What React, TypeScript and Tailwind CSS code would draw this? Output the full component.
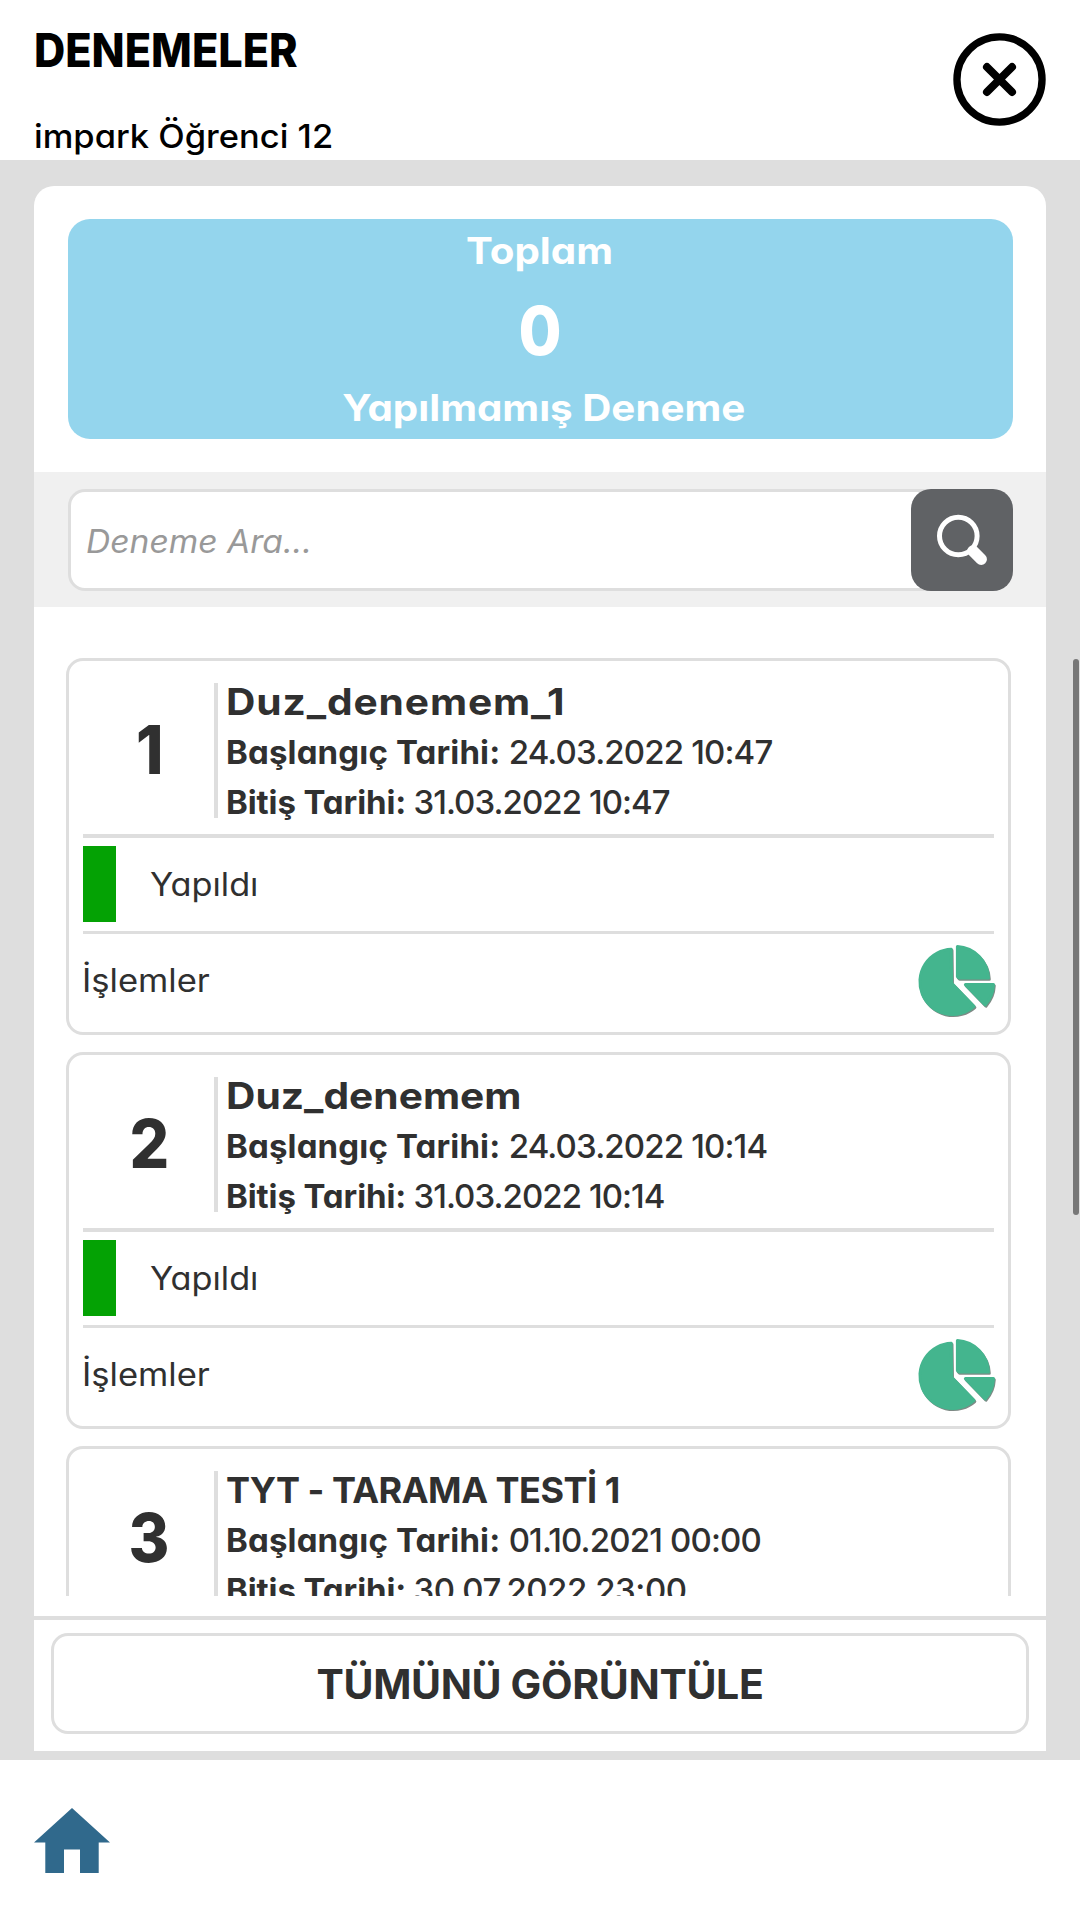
interface Exam {
  id: number;
  title: string;
  titleClass: string;
  start: string;
  end: string;
  endClass: string;
}

const exams: Exam[] = [
  {
    id: 1,
    title: "Duz_denemem_1",
    titleClass: "text-[37px] scale-x-[1.1] tracking-[0.8px]",
    start: "24.03.2022 10:47",
    end: "31.03.2022 10:47",
    endClass: "tracking-[-0.95px]",
  },
  {
    id: 2,
    title: "Duz_denemem",
    titleClass: "text-[37px] scale-x-[1.1]",
    start: "24.03.2022 10:14",
    end: "31.03.2022 10:14",
    endClass: "tracking-[-0.95px]",
  },
  {
    id: 3,
    title: "TYT - TARAMA TESTİ 1",
    titleClass: "text-4xl tracking-[-0.5px]",
    start: "01.10.2021 00:00",
    end: "30.07.2022 23:00",
    endClass: "tracking-[-0.45px]",
  },
];

function CloseIcon() {
  return (
    <svg width="93" height="93" viewBox="0 0 94 94" fill="none" stroke="#000">
      <circle cx="47" cy="47" r="43" strokeWidth="7.4" />
      <path d="M34.3 34.3 L59.7 59.7 M59.7 34.3 L34.3 59.7" strokeWidth="8" strokeLinecap="round" />
    </svg>
  );
}

function SearchIcon() {
  return (
    <svg width="102" height="102" viewBox="0 0 102 102" fill="none" stroke="#fff">
      <circle cx="47.3" cy="47" r="18.8" strokeWidth="5" />
      <path d="M62 62 L70.2 70.2" strokeWidth="11.5" strokeLinecap="round" />
      <path d="M59 59 L66 66" strokeWidth="9" />
    </svg>
  );
}

function PieShapes() {
  return (
    <g strokeWidth="3" strokeLinejoin="round">
      <path d="M33.2 4.2 A32.6 32.6 0 1 0 56 61.3 L33.7 38.2 Z" />
      <path d="M39.4 1.5 A33 33 0 0 1 70.5 33 L40.8 33 L39.4 31.5 Z" />
      <path d="M47.4 39.6 L75.5 39.6 A33 33 0 0 1 67.2 60 Z" />
    </g>
  );
}

function PieIcon() {
  return (
    <svg width="78" height="74" viewBox="0 0 78 74" className="-mt-0.5 -mr-0.5 overflow-visible">
      <g transform="translate(0.8 1.2)" fill="#7d8a85" stroke="#7d8a85">
        <PieShapes />
      </g>
      <g fill="#44b58e" stroke="#44b58e">
        <PieShapes />
      </g>
    </svg>
  );
}

function HomeIcon() {
  return (
    <svg width="76" height="65" viewBox="0 0 76 65" fill="#30698c">
      <path d="M38 0 L76 34.5 H64.7 V65 H46 V41.5 H30 V65 H11.3 V34.5 H0 Z" />
    </svg>
  );
}

function ExamCard({ exam }: { exam: Exam }) {
  return (
    <div className="shrink-0 rounded-[17px] border-[3px] border-[#dedede] px-3.5">
      <div className="flex border-b-4 border-[#dedede] pt-[22px] pb-4">
        <div className="flex h-[135px] w-[131px] items-center justify-center pl-0.5 text-[67px] font-extrabold">
          <span className="scale-x-[0.93]">{exam.id}</span>
        </div>
        <div className="h-[135px] border-l-4 border-[#dedede] pl-2">
          <div className="-mt-1.5 whitespace-nowrap">
            <div className={`origin-left leading-[50px] font-bold ${exam.titleClass}`}>{exam.title}</div>
            <div className="text-[33px] leading-[50px]">
              <span className="mr-[-1px] font-bold tracking-[0.15px]">Başlangıç Tarihi:</span>{" "}
              <span className="font-medium tracking-[-0.85px]">{exam.start}</span>
            </div>
            <div className="text-[33px] leading-[50px]">
              <span className="mr-[-2px] font-bold tracking-[-0.1px]">Bitiş Tarihi:</span>{" "}
              <span className={`font-medium ${exam.endClass}`}>{exam.end}</span>
            </div>
          </div>
        </div>
      </div>
      <div className="flex items-center border-b-[3px] border-[#dedede] pt-2 pb-[9px]">
        <div className="h-[76px] w-[33px] bg-[#04a204]" />
        <span className="mt-0.5 ml-[34px] origin-left scale-x-[1.07] text-[32px]">Yapıldı</span>
      </div>
      <div className="flex h-[98px] items-center justify-between">
        <span className="-mt-1 -ml-px origin-left scale-x-[1.08] text-[32px]">İşlemler</span>
        <PieIcon />
      </div>
    </div>
  );
}

export default function App() {
  return (
    <div className="relative flex h-[1920px] w-[1080px] flex-col overflow-hidden bg-white font-['Inter',sans-serif] text-[#303030] [font-feature-settings:'cv11']">
      {/* Header */}
      <header className="flex h-40 shrink-0 justify-between pt-5 pr-[34px] pl-[34px] text-black">
        <div>
          <h1 className="origin-left scale-x-[0.94] text-[46px] leading-[60px] font-extrabold">DENEMELER</h1>
          <p className="mt-9 origin-left scale-x-[1.045] text-[33px] leading-10 font-medium">impark Öğrenci 12</p>
        </div>
        <div className="pt-[13px]">
          <CloseIcon />
        </div>
      </header>

      {/* Body */}
      <main className="h-[1600px] shrink-0 bg-[#dedede] px-[34px] pt-[26px] pb-[9px]">
        <div className="flex h-full flex-col rounded-t-[20px] bg-white">
          <div className="mt-[33px] mr-[33px] mb-[33px] ml-[34px] flex h-[220px] shrink-0 flex-col items-center rounded-[22px] bg-[#94d5ed] pt-3 font-bold text-white">
            <div className="-ml-0.5 scale-x-[1.09] text-[37px] leading-10">Toplam</div>
            <div className="mt-6 scale-x-[0.93] text-[67px] leading-[72px] font-extrabold">0</div>
            <div className="mt-[21px] ml-[7px] scale-x-[1.09] text-[37px] leading-10">Yapılmamış Deneme</div>
          </div>

          <div className="flex h-[135px] shrink-0 bg-[#f0f0f0] pt-[17px] pr-[33px] pl-[34px]">
            <div className="-mr-5 flex h-[102px] flex-1 items-center rounded-l-[17px] border-[3px] border-[#dedede] bg-white pt-1 pl-[15px] text-[32px] text-[#999] italic">
              <span className="origin-left scale-x-[1.05]">Deneme Ara...</span>
            </div>
            <button className="relative h-[102px] w-[102px] rounded-[20px] bg-[#606265]">
              <SearchIcon />
            </button>
          </div>

          <div className="flex h-[989px] shrink-0 flex-col gap-[17px] overflow-hidden pt-[51px] pr-[35px] pl-8">
            {exams.map((exam) => (
              <ExamCard key={exam.id} exam={exam} />
            ))}
          </div>

          <div className="mt-5 border-t-4 border-[#dedede] px-[17px] pt-[13px]">
            <button className="h-[101px] w-full rounded-[17px] border-[3px] border-[#dedede] pt-0.5 text-[41px] font-bold tracking-[-0.35px]">
              TÜMÜNÜ GÖRÜNTÜLE
            </button>
          </div>
        </div>
      </main>

      {/* Bottom bar */}
      <footer className="flex-1 pt-12 pl-[34px]">
        <HomeIcon />
      </footer>

      {/* Scroll indicator */}
      <div className="absolute top-[659px] right-px h-[556px] w-1.5 rounded-full bg-[#777]" />
    </div>
  );
}
